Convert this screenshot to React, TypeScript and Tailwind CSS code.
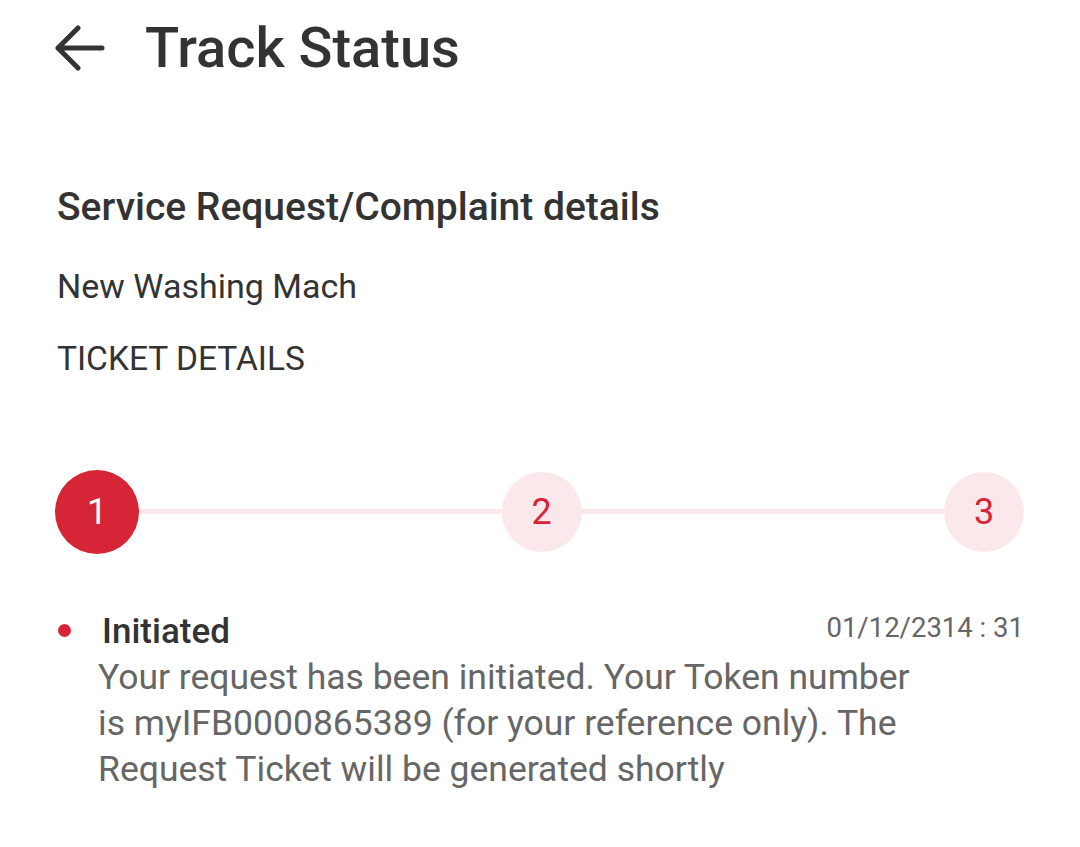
import React from "react";

const RED = "#d62536";

function BackArrow() {
  return (
    <svg width="50" height="46" viewBox="0 0 50 46" fill="none">
      <path
        d="M3 23H47M3 23L23 3M3 23L23 43"
        stroke="#333333"
        strokeWidth="5"
        strokeLinecap="round"
        strokeLinejoin="round"
      />
    </svg>
  );
}

function Step({ n, active }: { n: number; active?: boolean }) {
  return (
    <div
      className={
        active
          ? "w-[84px] h-[84px] rounded-full bg-[#d62536] text-white flex items-center justify-center text-[36px] shrink-0"
          : "w-[80px] h-[80px] rounded-full bg-[#fbe8ea] text-[#d62536] flex items-center justify-center text-[36px] shrink-0"
      }
    >
      {n}
    </div>
  );
}

export default function App() {
  return (
    <div
      className="min-h-screen bg-white text-[#333333] pl-[55px] pr-[56px]"
      style={{ fontFamily: "Roboto, 'Noto Sans', sans-serif" }}
    >
      <header className="flex items-center h-[96px] gap-[40px]">
        <BackArrow />
        <h1 className="text-[56px] font-medium leading-none">Track Status</h1>
      </header>

      <section className="mt-[92px] pl-[2px]">
        <h2 className="text-[39px] font-medium leading-none">
          Service Request/Complaint details
        </h2>
        <p className="mt-[42px] text-[34px] leading-none">New Washing Mach</p>
        <p className="mt-[39px] text-[33.5px] leading-none">TICKET DETAILS</p>
      </section>

      <div className="mt-[94px] flex items-center">
        <Step n={1} active />
        <div className="flex-1 h-[5px] bg-[#fbe8ea]" />
        <Step n={2} />
        <div className="flex-1 h-[5px] bg-[#fbe8ea]" />
        <Step n={3} />
      </div>

      <div className="mt-[60px] flex">
        <div className="w-[43px] pt-[10px] pl-[3px]">
          <div className="w-[13px] h-[13px] rounded-full" style={{ background: RED }} />
        </div>
        <div className="flex-1">
          <div className="flex items-start justify-between">
            <span className="text-[35px] font-medium leading-none pl-[4px]">
              Initiated
            </span>
            <span className="text-[27.5px] leading-none text-[#666666]">
              01/12/2314 : 31
            </span>
          </div>
          <p className="mt-[5px] text-[35.5px] leading-[46px] text-[#666666] whitespace-nowrap">
            Your request has been initiated. Your Token number
            <br />
            is myIFB0000865389 (for your reference only). The
            <br />
            Request Ticket will be generated shortly
          </p>
        </div>
      </div>
    </div>
  );
}
